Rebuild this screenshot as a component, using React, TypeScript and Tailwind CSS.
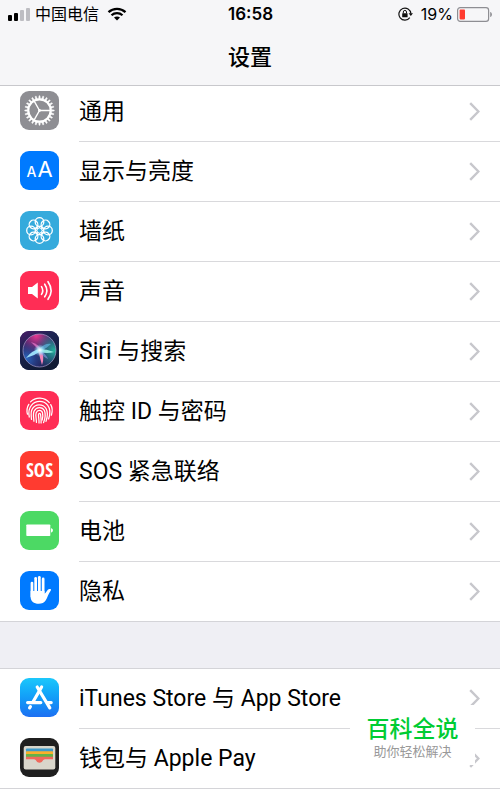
import type { ReactNode } from "react";

const GearIcon = () => (
  <svg viewBox="0 0 39 39" className="size-full" fill="none" stroke="#fff">
    <circle cx="19.5" cy="19.5" r="11.2" strokeWidth="2.2" />
    {Array.from({ length: 24 }, (_, i) => (
      <path
        key={i}
        d="M31.2 18.7L34.2 19V20L31.2 20.3Z"
        fill="#fff"
        strokeWidth="0.5"
        transform={`rotate(${i * 15} 19.5 19.5)`}
      />
    ))}
    <path
      d="M19.5 19.5H30M19.5 19.5L14.2 10.2M19.5 19.5L14.2 28.8"
      strokeWidth="1.4"
    />
    <circle cx="19.5" cy="19.5" r="1.4" fill="#fff" stroke="none" />
  </svg>
);

const DisplayIcon = () => (
  <span className="flex size-full items-baseline justify-center gap-px pt-0.5 text-white">
    <span className="text-sm font-medium">A</span>
    <span className="text-[22px]">A</span>
  </span>
);

const WallpaperIcon = () => (
  <svg viewBox="0 0 39 39" className="size-full" fill="none" stroke="#fff">
    {Array.from({ length: 8 }, (_, i) => (
      <circle
        key={i}
        cx="19.5"
        cy="11"
        r="4.3"
        strokeWidth="1.3"
        transform={`rotate(${i * 45} 19.5 19.5)`}
      />
    ))}
    {Array.from({ length: 8 }, (_, i) => (
      <path
        key={i}
        d="M19.5 17L18.2 14.9M19.5 17L20.8 14.9"
        strokeWidth="0.9"
        transform={`rotate(${i * 45} 19.5 19.5)`}
      />
    ))}
    <circle cx="19.5" cy="19.5" r="2.6" strokeWidth="1" />
  </svg>
);

const SoundIcon = () => (
  <svg viewBox="0 0 39 39" className="size-full" fill="none" stroke="#fff">
    <path d="M8 16H12L17.8 11.6V27.4L12 23H8Z" fill="#fff" stroke="none" />
    <g strokeWidth="1.6" strokeLinecap="round">
      <path d="M21.5 15.6Q24 19.5 21.5 23.4" />
      <path d="M24.7 13.2Q29 19.5 24.7 25.8" />
      <path d="M28 10.7Q34.2 19.5 28 28.3" />
    </g>
  </svg>
);

const SiriIcon = () => (
  <svg viewBox="0 0 39 39" className="size-full">
    <defs>
      <linearGradient id="siri-bg" x1="0" y1="0" x2="0.5" y2="1">
        <stop offset="0" stopColor="#4a1a66" />
        <stop offset="0.4" stopColor="#1c2452" />
        <stop offset="1" stopColor="#101a34" />
      </linearGradient>
      <radialGradient id="siri-pink" cx="0.4" cy="0.05" r="0.65">
        <stop offset="0" stopColor="#e8388f" />
        <stop offset="1" stopColor="#8a2d8c" stopOpacity="0" />
      </radialGradient>
      <radialGradient id="siri-teal" cx="0.95" cy="0.5" r="0.6">
        <stop offset="0" stopColor="#24b39b" />
        <stop offset="1" stopColor="#1c7f95" stopOpacity="0" />
      </radialGradient>
      <radialGradient id="siri-blue" cx="0.1" cy="0.75" r="0.55">
        <stop offset="0" stopColor="#2b6bc4" />
        <stop offset="1" stopColor="#27408f" stopOpacity="0" />
      </radialGradient>
      <radialGradient id="siri-glow">
        <stop offset="0" stopColor="#fff" />
        <stop offset="0.4" stopColor="#b9f3ff" stopOpacity="0.8" />
        <stop offset="1" stopColor="#7fd8ff" stopOpacity="0" />
      </radialGradient>
    </defs>
    <rect width="39" height="39" fill="url(#siri-bg)" />
    <circle cx="19.5" cy="19.5" r="16.5" fill="#24245c" />
    <circle cx="19.5" cy="19.5" r="16.5" fill="url(#siri-pink)" />
    <circle cx="19.5" cy="19.5" r="16.5" fill="url(#siri-teal)" />
    <circle cx="19.5" cy="19.5" r="16.5" fill="url(#siri-blue)" />
    <path d="M20 18Q12 19 6 27Q14 25 21 20Z" fill="#9adcf8" />
    <path d="M19 19L11 11Q18 13 21 18Z" fill="#e273c4" opacity="0.8" />
    <path d="M18 19Q20 27 22 34Q25 26 21 18Z" fill="#f284b8" />
    <path d="M19 18Q25 12 31 13Q27 17 21 20Z" fill="#5fb5e0" opacity="0.7" />
    <path d="M19 18Q27 18 34 21Q27 23 20 21Z" fill="#9df2e6" opacity="0.9" />
    <path d="M20 19Q26 23 28 28Q22 25 19 20Z" fill="#8f9be8" opacity="0.6" />
    <circle cx="19.7" cy="19.2" r="6" fill="url(#siri-glow)" />
    <circle
      cx="19.5"
      cy="19.5"
      r="16.5"
      fill="none"
      stroke="#b5a9d6"
      strokeOpacity="0.7"
      strokeWidth="0.9"
    />
  </svg>
);

const TouchIdIcon = () => (
  <svg
    viewBox="0 0 39 39"
    className="size-full"
    fill="none"
    stroke="#fff"
    strokeWidth="1.25"
    strokeLinecap="round"
  >
    <path d="M10.5 10.9A12.6 12.6 0 0 1 29.3 11.6" />
    <path d="M7.5 23.2C6.4 19.6 7 16.3 8.8 13.4M30.7 13.6C32.4 16.4 32.7 20 31.4 24.2" />
    <path d="M9.3 26C8.4 21.8 8.7 17.6 11.4 14.4C15.7 9.2 23.6 9.2 27.6 14.2C30.6 18.1 30.3 23.3 28.6 28" />
    <path d="M11.5 28.4C11.2 25.6 10.4 21 12.3 17.9C15.3 12.6 22.8 12.4 25.9 17.3C28.2 21.4 27.5 26.2 26 30.4" />
    <path d="M13.9 30.2C13.9 27.2 12.6 22.8 14.2 19.9C16.4 15.5 22.4 15.4 24.4 19.6C25.9 23.4 25 28 23.6 31.6" />
    <path d="M16.4 31.4C16.6 28 15.1 24.4 16.2 21.7C17.4 18.6 21.6 18.6 22.5 21.8C23.2 24.6 22.8 27 22.2 29" />
    <path d="M19 32C19.3 28.8 18.3 26 18.5 23.6C18.7 22 20.4 22.1 20.6 23.6C20.9 26.8 21.4 28.8 21.1 32" />
  </svg>
);

const SosIcon = () => (
  <span className="flex size-full items-center justify-center pb-px font-['Liberation_Sans_Narrow','Open_Sans_Condensed','DejaVu_Sans_Condensed',sans-serif] text-[19px] font-bold text-white">
    SOS
  </span>
);

const BatteryIcon = () => (
  <svg viewBox="0 0 39 39" className="size-full" fill="#fff">
    <rect x="6.3" y="13.4" width="24" height="11.6" rx="0.8" />
    <path d="M31 17.2C33.6 17.4 33.6 21.2 31 21.4Z" />
  </svg>
);

const HandIcon = () => (
  <svg viewBox="0 0 39 39" className="size-full" fill="#fff">
    <rect x="10.6" y="10.8" width="2.7" height="16" rx="1.3" />
    <rect x="14.3" y="6" width="2.7" height="20" rx="1.3" />
    <rect x="18" y="5" width="2.7" height="20" rx="1.3" />
    <rect x="21.8" y="6.6" width="2.7" height="20" rx="1.3" />
    <path d="M10.6 20H24.5V22.8C26.3 22 27 18.2 29.4 18C30.9 17.9 31.5 18.6 30.8 19.4C28.4 22.3 27.5 26.6 25.6 29.5C24 31.9 22 32.8 18.8 32.8C13.8 32.8 10.6 30.4 10.6 25.5Z" />
  </svg>
);

const AppStoreIcon = () => (
  <svg
    viewBox="0 0 39 39"
    className="size-full"
    fill="none"
    stroke="#fff"
    strokeWidth="3.2"
    strokeLinecap="round"
  >
    <path d="M21.6 9L12.8 24.2" />
    <path d="M17.2 9L29.8 29.8" />
    <path d="M7.6 24.6H20.8M27.4 24.6H31.2" />
    <path d="M10.4 28.6L9.6 29.9" />
  </svg>
);

const WalletIcon = () => (
  <svg viewBox="0 0 39 39" className="size-full">
    <rect x="3.7" y="8" width="31.6" height="23.6" rx="2" fill="#d9d6cb" />
    <rect x="6" y="10.4" width="27" height="5" rx="0.8" fill="#3f9bca" />
    <rect x="6" y="13.2" width="27" height="4" rx="0.6" fill="#fbb02b" />
    <rect x="6" y="15.9" width="27" height="4" rx="0.6" fill="#64b347" />
    <path
      d="M6 18.8H33V21.2H25C22.8 21.2 22.6 24.7 19.5 24.7S16.2 21.2 14 21.2H6Z"
      fill="#f0695c"
    />
  </svg>
);

const Chevron = () => (
  <svg
    viewBox="0 0 11 19"
    className="h-[19px] w-[11px] shrink-0"
    fill="none"
    stroke="#c7c7cc"
    strokeWidth="2.4"
  >
    <path d="M1.2 1.2L9.4 9.5L1.2 17.8" />
  </svg>
);

const WifiIcon = () => (
  <svg viewBox="0 0 20 14" className="h-3.5 w-5" fill="none" stroke="#000">
    <path d="M1.5 5.2C6.3 0.7 13.7 0.7 18.5 5.2" strokeWidth="2.3" />
    <path d="M4.5 8.3C7.6 5.4 12.4 5.4 15.5 8.3" strokeWidth="2.2" />
    <path d="M7 10.6C8.7 9.1 11.3 9.1 13 10.6L10 13.6Z" fill="#000" stroke="none" />
  </svg>
);

const RotationLockIcon = () => (
  <svg viewBox="0 0 15 14" className="h-3.5 w-[15px]" fill="none" stroke="#111">
    <path d="M11.8 10.6A6 6 0 1 1 12.9 6.6" strokeWidth="1.2" />
    <path d="M10.6 6.3H15L12.8 9Z" fill="#111" stroke="none" />
    <rect x="4.2" y="6.2" width="5.4" height="4" rx="0.5" fill="#111" stroke="none" />
    <path d="M5.3 6.4V5A1.6 1.6 0 0 1 8.5 5V6.4" strokeWidth="1" />
  </svg>
);

const StatusBattery = () => (
  <svg viewBox="0 0 36 15" className="h-[15px] w-9" fill="none">
    <rect x="0.6" y="0.6" width="31" height="13.8" rx="2.6" stroke="#8e8e93" strokeWidth="1.2" />
    <rect x="2.6" y="2.6" width="5.4" height="9.8" rx="0.8" fill="#ff3b30" />
    <path d="M33.2 5C35.5 5.6 35.5 9.4 33.2 10Z" fill="#8e8e93" />
  </svg>
);

const SettingsRow = ({
  label,
  color,
  icon,
}: {
  label: string;
  color: string;
  icon: ReactNode;
}) => {
  return (
    <li className="group">
      <a href="#" className="flex h-[60px] items-stretch pl-5 group-last:border-b group-last:border-[#d4d4d8]">
        <span className="flex items-center pb-[3px]">
          <span className={`block size-[39px] overflow-hidden rounded-[9px] ${color}`}>
            {icon}
          </span>
        </span>
        <span className="ml-5 flex flex-1 items-center justify-between border-b border-[#d9d9dc] pr-5 group-last:border-b-0">
          <span className="pt-px font-[Roboto,'Noto_Sans_CJK_SC',sans-serif] text-[23px] leading-7">
            {label}
          </span>
          <Chevron />
        </span>
      </a>
    </li>
  );
};

const general = [
  { label: "通用", color: "bg-[#8e8e93]", icon: <GearIcon /> },
  { label: "显示与亮度", color: "bg-[#007aff]", icon: <DisplayIcon /> },
  { label: "墙纸", color: "bg-[#35aadc]", icon: <WallpaperIcon /> },
  { label: "声音", color: "bg-[#ff2d55]", icon: <SoundIcon /> },
  { label: "Siri 与搜索", color: "bg-[#1c2452]", icon: <SiriIcon /> },
  { label: "触控 ID 与密码", color: "bg-[#ff2d55]", icon: <TouchIdIcon /> },
  { label: "SOS 紧急联络", color: "bg-[#ff3b30]", icon: <SosIcon /> },
  { label: "电池", color: "bg-[#4cd964]", icon: <BatteryIcon /> },
  { label: "隐私", color: "bg-[#007aff]", icon: <HandIcon /> },
];

const stores = [
  {
    label: "iTunes Store 与 App Store",
    color: "bg-linear-to-b from-[#1cc8fb] to-[#1d6ff2]",
    icon: <AppStoreIcon />,
  },
  { label: "钱包与 Apple Pay", color: "bg-[#1f1f1f]", icon: <WalletIcon /> },
];

const App = () => {
  return (
    <div className="min-h-screen bg-white font-[Inter,'Noto_Sans_CJK_SC',sans-serif] text-black">
      <header className="relative z-10 border-b border-[#c8c8cc] bg-[#f6f6f8] pb-3">
        <div className="flex h-7 items-center pr-[7px] pl-2 text-base leading-5">
          <div className="flex flex-1 items-center">
            <div className="flex items-end gap-0.5">
              <span className="h-1.5 w-1 rounded-[1px] bg-black" />
              <span className="h-2 w-1 rounded-[1px] bg-black" />
              <span className="h-[11px] w-1 rounded-[1px] bg-[#bdbdc2]" />
              <span className="h-[13px] w-1 rounded-[1px] bg-[#bdbdc2]" />
            </div>
            <span className="ml-[5px] mr-2">中国电信</span>
            <WifiIcon />
          </div>
          <span className="text-[17px] font-semibold">16:58</span>
          <div className="flex flex-1 items-center justify-end">
            <RotationLockIcon />
            <span className="ml-2 mr-1">19%</span>
            <StatusBattery />
          </div>
        </div>
        <h1 className="pt-3.5 text-center text-[22px] leading-[31px] font-medium">设置</h1>
      </header>
      <main className="-mt-1">
        <ul>
          {general.map((item) => (
            <SettingsRow key={item.label} {...item} />
          ))}
        </ul>
        <div className="h-[47px] border-b border-[#d4d4d8] bg-[#efeff4]" />
        <section className="relative">
          <ul>
            {stores.map((item) => (
              <SettingsRow key={item.label} {...item} />
            ))}
          </ul>
          <div className="absolute top-9 right-[25px] flex h-[60px] w-[125px] flex-col items-center bg-white pt-2">
            <strong className="text-[23px] leading-8 font-medium text-[#0c3]">百科全说</strong>
            <span className="text-[13px] leading-3 text-[#999]">助你轻松解决</span>
          </div>
        </section>
      </main>
    </div>
  );
};

export default App;
